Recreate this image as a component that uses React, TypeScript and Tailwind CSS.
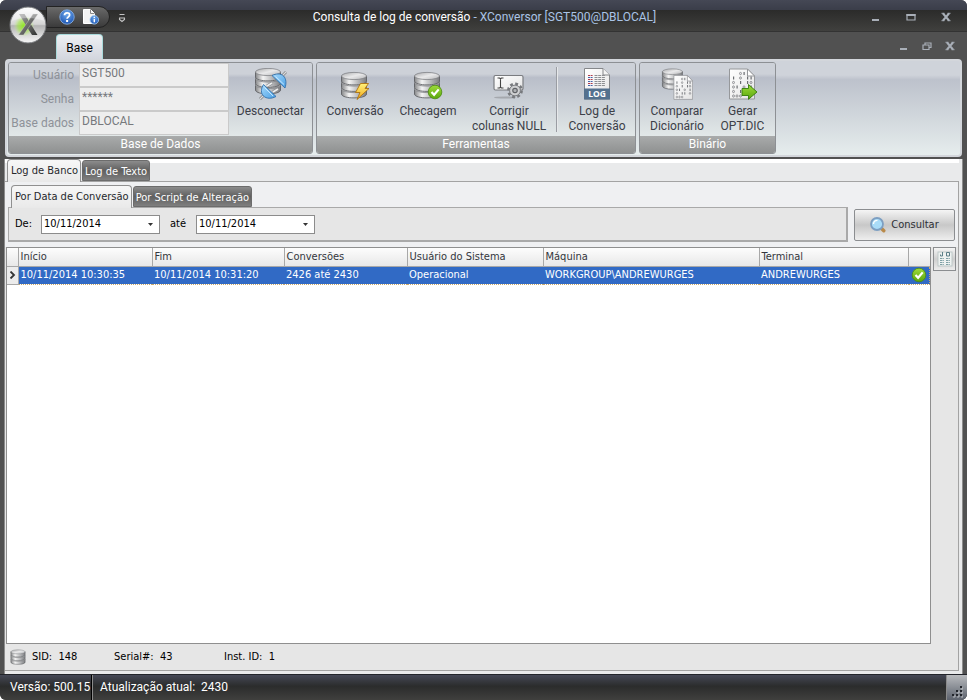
import { useState } from "react";
import type { ReactNode } from "react";

/* ---------- Icons ---------- */

function Gradients() {
  return (
    <svg width="0" height="0" className="absolute" aria-hidden="true">
      <defs>
        <linearGradient id="metal" x1="0" x2="1" y1="0" y2="0">
          <stop offset="0" stopColor="#858688" />
          <stop offset="0.3" stopColor="#f4f4f4" />
          <stop offset="0.65" stopColor="#b9babc" />
          <stop offset="1" stopColor="#7c7d80" />
        </linearGradient>
        <linearGradient id="metalTop" x1="0" x2="1" y1="0" y2="1">
          <stop offset="0" stopColor="#a9aaac" />
          <stop offset="0.5" stopColor="#e9e9ea" />
          <stop offset="1" stopColor="#b5b6b8" />
        </linearGradient>
        <linearGradient id="paper" x1="0" x2="1" y1="0" y2="1">
          <stop offset="0" stopColor="#ffffff" />
          <stop offset="1" stopColor="#e4e4e4" />
        </linearGradient>
        <linearGradient id="green" x1="0" x2="0" y1="0" y2="1">
          <stop offset="0" stopColor="#9fdc3c" />
          <stop offset="1" stopColor="#5aa60c" />
        </linearGradient>
        <linearGradient id="bolt" x1="0" x2="0" y1="0" y2="1">
          <stop offset="0" stopColor="#fff27a" />
          <stop offset="1" stopColor="#f2a818" />
        </linearGradient>
        <linearGradient id="plug" x1="0" x2="1" y1="0" y2="1">
          <stop offset="0" stopColor="#a6dafc" />
          <stop offset="1" stopColor="#4a9fe4" />
        </linearGradient>
        <radialGradient id="blue" cx="0.5" cy="0.3" r="0.7">
          <stop offset="0" stopColor="#6fa9ec" />
          <stop offset="1" stopColor="#1c55b4" />
        </radialGradient>
        <linearGradient id="orb" x1="0" x2="0" y1="0" y2="1">
          <stop offset="0" stopColor="#ffffff" />
          <stop offset="0.48" stopColor="#d4d4d4" />
          <stop offset="0.52" stopColor="#b4b4b4" />
          <stop offset="1" stopColor="#f8f8f8" />
        </linearGradient>
        <radialGradient id="orbGlow">
          <stop offset="0" stopColor="#8fea1e" />
          <stop offset="0.6" stopColor="#a5e84a" stopOpacity="0.6" />
          <stop offset="1" stopColor="#c8f09a" stopOpacity="0" />
        </radialGradient>
        <linearGradient id="letter" x1="0" x2="1" y1="0" y2="1">
          <stop offset="0" stopColor="#a5a5a5" />
          <stop offset="1" stopColor="#303230" />
        </linearGradient>
      </defs>
    </svg>
  );
}

function Disks() {
  return (
    <>
      {[17, 10.5, 4].map((y) => (
        <g key={y}>
          <path
            d={`M0.5 ${y} v5 c0 5.2 25 5.2 25 0 v-5 z`}
            fill="url(#metal)"
            stroke="#55575b"
            strokeWidth="0.8"
          />
          <ellipse cx="13" cy={y} rx="12.5" ry="3.6" fill="url(#metalTop)" stroke="#77797c" strokeWidth="0.7" />
        </g>
      ))}
    </>
  );
}

function Icon({ children }: { children: ReactNode }) {
  return (
    <svg viewBox="0 0 32 32" className="size-8 shrink-0" aria-hidden="true">
      {children}
    </svg>
  );
}

function DisconnectIcon() {
  return (
    <Icon>
      <Disks />
      <path d="M5 31 L9 27 M27 8 L31 4" stroke="#7c7e82" strokeWidth="2.6" />
      <path d="M5 31 L9 27 M27 8 L31 4" stroke="#dcdcdc" strokeWidth="1.2" />
      <path d="M12 18 l5 -3 M18 24 l5 -3" stroke="#8a8c90" strokeWidth="3" />
      <path d="M12 18 l5 -3 M18 24 l5 -3" stroke="#ededed" strokeWidth="1.6" />
      <path d="M8.5 16.5 L21 28.5 C16.500 31 11.500 30.800 8.500 28 C5.500 25 6 20.500 8.500 16.500 Z" fill="url(#plug)" stroke="#3271ac" strokeWidth="0.9" />
      <path d="M17 7.500 L30 20 C31.500 15.500 31.300 10.800 28.500 8 C25.500 5.200 21 5.500 17 7.500 Z" fill="url(#plug)" stroke="#3271ac" strokeWidth="0.9" />
      <path d="M9.500 19.500 L18 28 M20.500 8.500 L29 16.500" stroke="#d2edff" strokeWidth="0.9" />
    </Icon>
  );
}

function ConvertIcon() {
  return (
    <Icon>
      <g transform="translate(2 4)">
        <Disks />
      </g>
      <path d="M21.5 15.5 L29.5 15.5 L26 20.5 L30 20.5 L18 31.500 L21 24.500 L16.500 24.500 Z" fill="url(#bolt)" stroke="#b07411" strokeWidth="0.9" strokeLinejoin="round" />
    </Icon>
  );
}

function CheckCircle() {
  return (
    <>
      <circle r="6.800" fill="url(#green)" stroke="#4a8a0e" strokeWidth="0.8" />
      <path d="M-3.500 0 L-0.900 2.800 L3.700 -2.600" fill="none" stroke="#fff" strokeWidth="2.200" />
    </>
  );
}

function CheckDbIcon() {
  return (
    <Icon>
      <g transform="translate(2 4)">
        <Disks />
      </g>
      <g transform="translate(23 24)">
        <CheckCircle />
      </g>
    </Icon>
  );
}

function FieldGearIcon() {
  return (
    <Icon>
      <ellipse cx="12" cy="29.500" rx="11" ry="1" fill="#8d9095" opacity="0.6" />
      <rect x="1" y="7.500" width="29" height="14.500" rx="1.500" fill="url(#paper)" stroke="#7a7c80" strokeWidth="1.200" />
      <path d="M4.500 10 h2 l1 0.800 l1 -0.800 h2 M7.500 10.500 v9 M4.500 20 h2 l1 -0.800 l1 0.800 h2" stroke="#444" strokeWidth="1.100" fill="none" />
      <g transform="translate(22 22.500)">
        <circle r="6.600" fill="none" stroke="#77797d" strokeWidth="2.600" strokeDasharray="2.800 2.384" />
        <circle r="5.400" fill="#cfd0d2" stroke="#77797d" strokeWidth="1" />
        <circle r="2.200" fill="#aeb0b3" stroke="#5f6165" strokeWidth="1.200" />
      </g>
    </Icon>
  );
}

function LogIcon() {
  const rows = [7.5, 9.5, 11.5, 13.5, 15.5, 17.5];
  return (
    <Icon>
      <path d="M3.500 0.500 H22 L28.500 7 V31 H3.500 Z" fill="url(#paper)" stroke="#85878a" />
      <path d="M22 0.500 V7 H28.500" fill="#f4f4f4" stroke="#85878a" />
      {rows.map((y, i) => (
        <g key={y} strokeWidth="1">
          <path d={`M7 ${y} h5`} stroke={i % 2 ? "#4462a8" : "#b03a4a"} strokeDasharray="2 0.600" />
          <path d={`M13.500 ${y} h11`} stroke="#8d8f92" strokeDasharray="3 0.700" />
        </g>
      ))}
      <rect x="3" y="20.500" width="26" height="11" fill="#54718e" />
      <text x="16" y="29" textAnchor="middle" fontSize="8.500" fontWeight="700" fill="#fff" fontFamily="Open Sans, sans-serif">
        LOG
      </text>
    </Icon>
  );
}

/* rows of ticks and dots: 1 is a tick, 0 is a small ring */
const bits = ["  01 ", "1 0 11", "0 1 10", "01 0 1", "0 11 0", "000 "];

function BinarySheet() {
  return (
    <>
      <path d="M0.500 0.500 H18.500 L25.500 7.500 V30.500 H0.500 Z" fill="url(#paper)" stroke="#96989b" />
      <path d="M18.500 0.500 V7.500 H25.500 Z" fill="#fff" stroke="#96989b" />
      {bits.map((line, i) =>
        [...line].map((bit, j) => {
          if (bit === " ") return null;
          const x = 4 + j * 3.5;
          const y = 3.5 + i * 4.5;
          return bit === "1" ? (
            <rect key={`${i}-${j}`} x={x} y={y} width="1.200" height="3" fill="#6c6e72" />
          ) : (
            <rect key={`${i}-${j}`} x={x - 0.4} y={y + 0.4} width="1.800" height="2.200" rx="0.800" fill="none" stroke="#77797d" strokeWidth="0.800" />
          );
        })
      )}
    </>
  );
}

function CompareIcon() {
  return (
    <Icon>
      <g transform="translate(1 0.500) scale(0.800)">
        <Disks />
      </g>
      <g transform="translate(12.500 7) scale(0.750 0.800)">
        <BinarySheet />
      </g>
    </Icon>
  );
}

function GenerateIcon() {
  return (
    <Icon>
      <g transform="translate(2 0.500)">
        <BinarySheet />
      </g>
      <path d="M15 20.500 H21.500 V16.500 L30 24 L21.500 31.300 V27.500 H15 Z" fill="url(#green)" stroke="#347a0a" strokeWidth="0.900" />
    </Icon>
  );
}

function OrbIcon() {
  return (
    <svg viewBox="0 0 38 38" className="size-[38px]" aria-hidden="true">
      <circle cx="19" cy="19" r="18" fill="url(#orb)" stroke="#75777a" />
      <circle cx="15" cy="20" r="10.500" fill="url(#orbGlow)" />
      <path d="M10 8 H15.500 L28.500 29 H23 Z" fill="url(#letter)" />
      <path d="M24 8 H29 L14.500 29 H9.500 Z" fill="url(#letter)" stroke="#d9d9d9" strokeWidth="0.400" />
      <path d="M3 15 C6 0 32 0 35 15 C26 11 12 11 3 15 Z" fill="#fff" opacity="0.350" />
    </svg>
  );
}

function HelpIcon() {
  return (
    <svg viewBox="0 0 16 16" className="size-4" aria-hidden="true">
      <circle cx="8" cy="8" r="7.200" fill="url(#blue)" stroke="#7fa6da" />
      <path d="M5.500 6.300 C5.500 3 10.600 3 10.600 6 C10.600 7.800 8.100 7.900 8.100 9.800" fill="none" stroke="#fff" strokeWidth="1.800" />
      <rect x="7.100" y="11" width="2" height="2" fill="#fff" />
    </svg>
  );
}

function PageInfoIcon() {
  return (
    <svg viewBox="0 0 16 16" className="size-4" aria-hidden="true">
      <path d="M0.500 0.500 H7.500 L11.500 4.500 V14.500 H0.500 Z" fill="#f3f3f3" stroke="#fff" />
      <path d="M7.500 0.500 V4.500 H11.500" fill="none" stroke="#888" />
      <circle cx="11.300" cy="10.800" r="4.300" fill="url(#blue)" stroke="#a9d2f6" strokeWidth="0.800" />
      <path d="M11.300 7.800 v1.300 M11.300 10 v3.300" stroke="#fff" strokeWidth="1.400" />
    </svg>
  );
}

function MagnifierIcon() {
  return (
    <svg viewBox="0 0 16 16" className="size-4" aria-hidden="true">
      <path d="M11.500 11.500 L13.800 13.800" stroke="#b98a4a" strokeWidth="3.400" strokeLinecap="round" />
      <circle cx="7" cy="7" r="6" fill="#a9dcf8" stroke="#7d9fc2" strokeWidth="1.800" />
      <path d="M3.500 7 C3.500 4.500 5 3.300 7.500 3.300" stroke="#fff" strokeWidth="1.300" fill="none" />
    </svg>
  );
}

function DetailsIcon() {
  return (
    <svg viewBox="0 0 16 16" className="size-4" aria-hidden="true">
      <rect x="1" y="1" width="14" height="14" fill="#eef2f1" stroke="#b4c0c0" strokeWidth="0.800" />
      <path d="M5.500 1 V5 H3.500 V3.500 M9.500 1.500 h3 v3.500 h-3 z" fill="none" stroke="#5b7f88" />
      <path d="M3 7.500 h4 M9 7.500 h4 M3 9.500 h4 M9 9.500 h4 M3 11.500 h4 M9 11.500 h4 M3 13.500 h4 M9 13.500 h4" stroke="#7fa0a5" strokeDasharray="2.500 0.700" />
    </svg>
  );
}

const Minimize = () => (
  <svg viewBox="0 0 10 10" className="size-[10px]">
    <path d="M1 8 h7" stroke="#a9afb8" strokeWidth="2" />
  </svg>
);

const Maximize = () => (
  <svg viewBox="0 0 10 10" className="size-[10px]">
    <path d="M1 2.500 h8 v5.500 h-8 z" fill="none" stroke="#a9afb8" strokeWidth="1.200" />
    <path d="M0.500 3 h9" stroke="#a9afb8" strokeWidth="2" />
  </svg>
);

const Restore = () => (
  <svg viewBox="0 0 10 10" className="size-[10px]">
    <path d="M1 4 h6 v4.500 h-6 z M3 4 v-2 h6 v4.500 h-2" fill="none" stroke="#a9afb8" strokeWidth="1.200" />
  </svg>
);

const Close = () => (
  <svg viewBox="0 0 10 10" className="size-[10px]">
    <path d="M2 1.500 L8 8.500 M8 1.500 L2 8.500" stroke="#a9afb8" strokeWidth="2" />
    <path d="M0.500 1.300 h3 M6.500 1.300 h3 M0.500 8.700 h3 M6.500 8.700 h3" stroke="#a9afb8" strokeWidth="1" />
  </svg>
);

/* ---------- Ribbon ---------- */

function RibbonGroup({ title, children }: { title: string; children: ReactNode }) {
  return (
    <section className="flex flex-col overflow-hidden rounded-[3px] border border-[#8d9094]">
      <div className="flex h-[73px] bg-linear-to-b from-[#cdd1d8] from-15% via-[#b9bec9] via-20% to-[#e2e8e8]">{children}</div>
      <h2 className="h-[17px] bg-linear-to-b from-[#a9abab] to-[#8f9191] text-center text-[12px] leading-[17px] text-white">{title}</h2>
    </section>
  );
}

function RibbonButton({ icon, label, className }: { icon: ReactNode; label: string; className: string }) {
  return (
    <button type="button" className={`flex flex-col items-center gap-1 pt-[5px] text-[12px] leading-[15px] text-[#3c4048] ${className}`}>
      {icon}
      <span className="whitespace-pre-line">{label}</span>
    </button>
  );
}

const credentials = [
  { id: "usuario", label: "Usuário", value: "SGT500" },
  { id: "senha", label: "Senha", value: "******" },
  { id: "base", label: "Base dados", value: "DBLOCAL" },
];

function Ribbon() {
  return (
    <div className="mx-[5px] flex h-[98px] gap-[3px] rounded-[4px] border-2 border-[#d3d6db] bg-linear-to-b from-[#cfd3da] from-15% via-[#bdc2cc] via-20% to-[#e6eded] p-px">
      <RibbonGroup title="Base de Dados">
        <div className="flex flex-col">
          {credentials.map((field) => (
            <div key={field.id} className="flex h-6 items-center">
              <label htmlFor={field.id} className="w-[70px] pr-[5px] text-right text-[12px] whitespace-nowrap text-[#8e9299]">
                {field.label}
              </label>
              <input
                id={field.id}
                readOnly
                defaultValue={field.value}
                className="h-6 w-[150px] border border-[#cacaca] bg-[#eeeeee] px-0.5 pb-1 text-[12px] text-[#77797d] outline-none"
              />
            </div>
          ))}
        </div>
        <RibbonButton icon={<DisconnectIcon />} label="Desconectar" className="w-[83px]" />
      </RibbonGroup>

      <RibbonGroup title="Ferramentas">
        <RibbonButton icon={<ConvertIcon />} label="Conversão" className="w-[76px]" />
        <RibbonButton icon={<CheckDbIcon />} label="Checagem" className="w-[70px]" />
        <RibbonButton icon={<FieldGearIcon />} label={"Corrigir\ncolunas NULL"} className="w-[92px]" />
        <div className="mx-px my-1 w-0.5 border-l border-[#9a9da3] bg-[#e6e8ea]" />
        <RibbonButton icon={<LogIcon />} label={"Log de\nConversão"} className="w-[76px]" />
      </RibbonGroup>

      <RibbonGroup title="Binário">
        <RibbonButton icon={<CompareIcon />} label={"Comparar\nDicionário"} className="w-[74px]" />
        <RibbonButton icon={<GenerateIcon />} label={"Gerar\nOPT.DIC"} className="mr-1 w-[57px]" />
      </RibbonGroup>
    </div>
  );
}

/* ---------- Title bar ---------- */

function TitleBar() {
  return (
    <header className="relative flex h-8 shrink-0 items-center border-b border-[#333] bg-linear-to-b from-[#454855] from-0% via-[#3b3e4a] via-30% to-[#3e3e3c] pt-0.5">
      <div className="absolute inset-x-0 top-[10px] bottom-0 bg-linear-to-b from-[#2b2b2a] to-[#40403e]" />
      <button type="button" aria-label="Menu" className="absolute top-1.5 left-[9px] z-10 rounded-full">
        <OrbIcon />
      </button>
      <div className="relative ml-[46px] flex h-[22px] w-16 items-center gap-2 rounded-r-full border border-[#232323] bg-linear-to-b from-[#6a6a6a] to-[#3b3b3b] pl-3">
        <button type="button" aria-label="Ajuda">
          <HelpIcon />
        </button>
        <button type="button" aria-label="Sobre">
          <PageInfoIcon />
        </button>
      </div>
      <button type="button" aria-label="Personalizar" className="relative ml-2 pt-0.5">
        <svg viewBox="0 0 8 10" className="h-[10px] w-2">
          <path d="M1.500 1.500 h5 M1.500 5 h5 v1.500 l-2.500 2 l-2.500 -2 z" fill="none" stroke="#c4c4c4" strokeWidth="1.100" />
        </svg>
      </button>
      <h1 className="relative flex-1 pr-7 text-center text-[12px] whitespace-nowrap text-white">
        Consulta de log de conversão <span className="text-[#aac4e6]">- XConversor [SGT500@DBLOCAL]</span>
      </h1>
      <div className="relative mr-4 flex gap-[25px]">
        <button type="button" aria-label="Minimizar"><Minimize /></button>
        <button type="button" aria-label="Maximizar"><Maximize /></button>
        <button type="button" aria-label="Fechar"><Close /></button>
      </div>
    </header>
  );
}

function RibbonTabs() {
  return (
    <div className="flex h-[27px] shrink-0 items-end justify-between pr-3 pl-14">
      <button
        type="button"
        className="h-[25px] w-[47px] rounded-t-[4px] border border-b-0 border-[#a9dadb] bg-linear-to-b from-[#eef0f3] to-[#d3d6de] pt-0.5 text-[12px] text-black"
      >
        Base
      </button>
      <div className="flex gap-[13px] self-center">
        <button type="button" aria-label="Minimizar documento"><Minimize /></button>
        <button type="button" aria-label="Restaurar documento"><Restore /></button>
        <button type="button" aria-label="Fechar documento"><Close /></button>
      </div>
    </div>
  );
}

/* ---------- Content ---------- */

interface TabsProps {
  items: string[];
  active: number;
  onSelect: (index: number) => void;
}

function Tabs({ items, active, onSelect }: TabsProps) {
  return (
    <div role="tablist" className="relative flex items-end gap-px">
      {items.map((item, i) => (
        <button
          key={item}
          type="button"
          role="tab"
          aria-selected={i === active}
          onClick={() => onSelect(i)}
          className={
            i === active
              ? "-mb-px h-[23px] rounded-t-[4px] border border-b-0 border-[#909090] bg-linear-to-b from-[#f7f7f7] to-[#e9e9e9] pr-0.5 pl-[3px] whitespace-nowrap text-[#26282c]"
              : "h-[21px] rounded-t-[3px] border border-[#6c6c6c] bg-linear-to-b from-[#8c8c8c] via-[#606060] via-50% to-[#7f7f7f] px-0.5 pt-[3px] whitespace-nowrap text-white"
          }
        >
          {item}
        </button>
      ))}
    </div>
  );
}

function DateField({ id, label }: { id: string; label: string }) {
  const [value, setValue] = useState("10/11/2014");

  return (
    <div className="flex items-center">
      <label htmlFor={id} className="w-[26px] text-black">{label}</label>
      <div className="flex h-[19px] w-[119px] items-center border border-[#8c8c8c] bg-white">
        <input
          id={id}
          value={value}
          onChange={(e) => setValue(e.target.value)}
          className="w-0 flex-1 bg-transparent pt-px pl-0.5 text-black outline-none"
        />
        <button type="button" aria-label="Abrir calendário" className="flex w-[17px] justify-center">
          <svg viewBox="0 0 5 3" className="h-[3px] w-[5px]">
            <path d="M0 0 H5 L2.500 3 Z" fill="#333" />
          </svg>
        </button>
      </div>
    </div>
  );
}

const columns = [
  { title: "Início", width: "w-[134px]" },
  { title: "Fim", width: "w-[132px]" },
  { title: "Conversões", width: "w-[123px]" },
  { title: "Usuário do Sistema", width: "w-[136px]" },
  { title: "Máquina", width: "w-[216px]" },
  { title: "Terminal", width: "" },
];

const row = [
  "10/11/2014 10:30:35",
  "10/11/2014 10:31:20",
  "2426 até 2430",
  "Operacional",
  "WORKGROUP\\ANDREWURGES",
  "ANDREWURGES",
];

function LogGrid() {
  return (
    <div className="flex-1 border border-[#8f8f8f] bg-white">
      <table className="w-full table-fixed border-collapse text-left leading-4">
        <thead>
          <tr className="h-[18px] bg-linear-to-b from-[#fdfdfd] to-[#e8e8e8]">
            <th className="w-[11px] border-r border-b border-[#a8a8a8] p-0" />
            {columns.map((column) => (
              <th key={column.title} className={`border-r border-b border-[#a8a8a8] p-0 pt-px pl-0.5 font-normal text-[#33363c] ${column.width}`}>
                {column.title}
              </th>
            ))}
            <th className="w-[21px] border-b border-[#a8a8a8] p-0" />
          </tr>
        </thead>
        <tbody>
          <tr className="h-[18px] bg-[#316ac5] text-white">
            <td className="border-r border-b border-[#a8a8a8] bg-[#ececec] p-0">
              <svg viewBox="0 0 8 8" className="ml-0.5 size-2">
                <path d="M1.500 0.500 L5 4 L1.500 7.500" fill="none" stroke="#333" strokeWidth="1.800" />
              </svg>
            </td>
            {row.map((cell, i) => (
              <td key={i} className="border-y border-dotted border-[#c9a86a] py-0 pl-0.5 whitespace-nowrap">
                {cell}
              </td>
            ))}
            <td className="border border-l-0 border-dotted border-[#c9a86a] p-0">
              <svg viewBox="-8 -8 16 16" className="mx-auto size-4" aria-label="Concluído">
                <CheckCircle />
              </svg>
            </td>
          </tr>
        </tbody>
      </table>
    </div>
  );
}

function Content() {
  const [tab, setTab] = useState(0);
  const [subTab, setSubTab] = useState(0);

  return (
    <main className="mx-1 mt-0.5 flex flex-1 flex-col border-x border-[#8c8c8c] bg-[#e9eaeb] pr-[3px] font-['DejaVu_Sans_Condensed','DejaVu_Sans',sans-serif] text-[11px]">
      <div className="border-t-4 border-white pl-0.5">
        <div className="-mt-1">
          <Tabs items={["Log de Banco", "Log de Texto"]} active={tab} onSelect={setTab} />
        </div>
      </div>

      <div className="mb-[3px] flex flex-1 flex-col border-t border-r border-b border-[#a3a3a3] bg-[#eff0f2]">
        <div className="flex items-end gap-1.5 pt-[3px] pr-[3px] pl-[3px]">
          <div className="flex-1">
            <div className="pl-[3px]">
              <Tabs items={["Por Data de Conversão", "Por Script de Alteração"]} active={subTab} onSelect={setSubTab} />
            </div>
            <div className="flex h-[35px] items-center gap-[10px] border border-r-2 border-b-2 border-[#a9a9a9] bg-[#e6e6e6] pl-1.5">
              <DateField id="de" label="De:" />
              <DateField id="ate" label="até" />
            </div>
          </div>
          <button
            type="button"
            className="mb-px flex h-8 w-[101px] items-center justify-center gap-[5px] rounded-[2px] border border-[#8b8d90] bg-linear-to-b from-[#f5f5f5] from-0% via-[#c8c8c8] via-50% to-[#eeeeee] text-[#2d3036]"
          >
            <MagnifierIcon />
            Consultar
          </button>
        </div>

        <div className="mt-[5px] flex flex-1 gap-0.5 bg-[#e6e6e6] pr-0.5 pl-px">
          <LogGrid />
          <button
            type="button"
            aria-label="Detalhes"
            className="flex h-6 w-[23px] items-center justify-center border border-[#8b8d90] bg-linear-to-b from-[#f5f5f5] via-[#cfcfcf] to-[#ececec]"
          >
            <DetailsIcon />
          </button>
        </div>

        <div className="flex h-[26px] items-center bg-[#e6e6e6] pl-[5px] whitespace-pre text-black">
          <svg viewBox="-1 -1 28 28" className="mr-1.5 size-4" aria-hidden="true">
            <Disks />
          </svg>
          <span className="w-[82px]">SID:  148</span>
          <span className="w-[110px]">Serial#:  43</span>
          <span>Inst. ID:  1</span>
        </div>
      </div>
    </main>
  );
}

function StatusBar() {
  return (
    <footer className="flex h-[26px] shrink-0 items-stretch border-t border-[#22242a] bg-linear-to-b from-[#454856] from-0% via-[#2b2c2c] via-45% to-[#40403e] text-[12px] leading-[24px] text-white">
      <span className="w-[92px] border-r border-black pl-[10px] whitespace-nowrap">Versão: 500.15</span>
      <span className="flex-1 border-l border-[#8b8b8b] pl-[7px] whitespace-pre">Atualização atual:  2430</span>
      <div className="flex w-[21px] items-end justify-center border-l border-[#8b8b8b] bg-linear-to-b from-[#b9bbbe] to-[#5d636e] pb-0.5">
        <svg viewBox="0 0 12 12" className="size-3" aria-hidden="true">
          <path d="M9 0 h2 v2 h-2 z M9 4 h2 v2 h-2 z M5 4 h2 v2 h-2 z M9 8 h2 v2 h-2 z M5 8 h2 v2 h-2 z M1 8 h2 v2 h-2 z" fill="#22252b" />
          <path d="M10 3 h2 v-2 M10 7 h2 v-2 M6 7 h2 v-2 M10 11 h2 v-2 M6 11 h2 v-2 M2 11 h2 v-2" fill="none" stroke="#c5c8cc" strokeWidth="0.800" />
        </svg>
      </div>
    </footer>
  );
}

export default function App() {
  return (
    <div className="min-h-screen bg-white font-[Roboto,'Open_Sans',sans-serif]">
      <Gradients />
      <div className="flex min-h-screen flex-col overflow-hidden rounded-md bg-[#515151]">
        <TitleBar />
        <RibbonTabs />
        <Ribbon />
        <Content />
        <StatusBar />
      </div>
    </div>
  );
}
